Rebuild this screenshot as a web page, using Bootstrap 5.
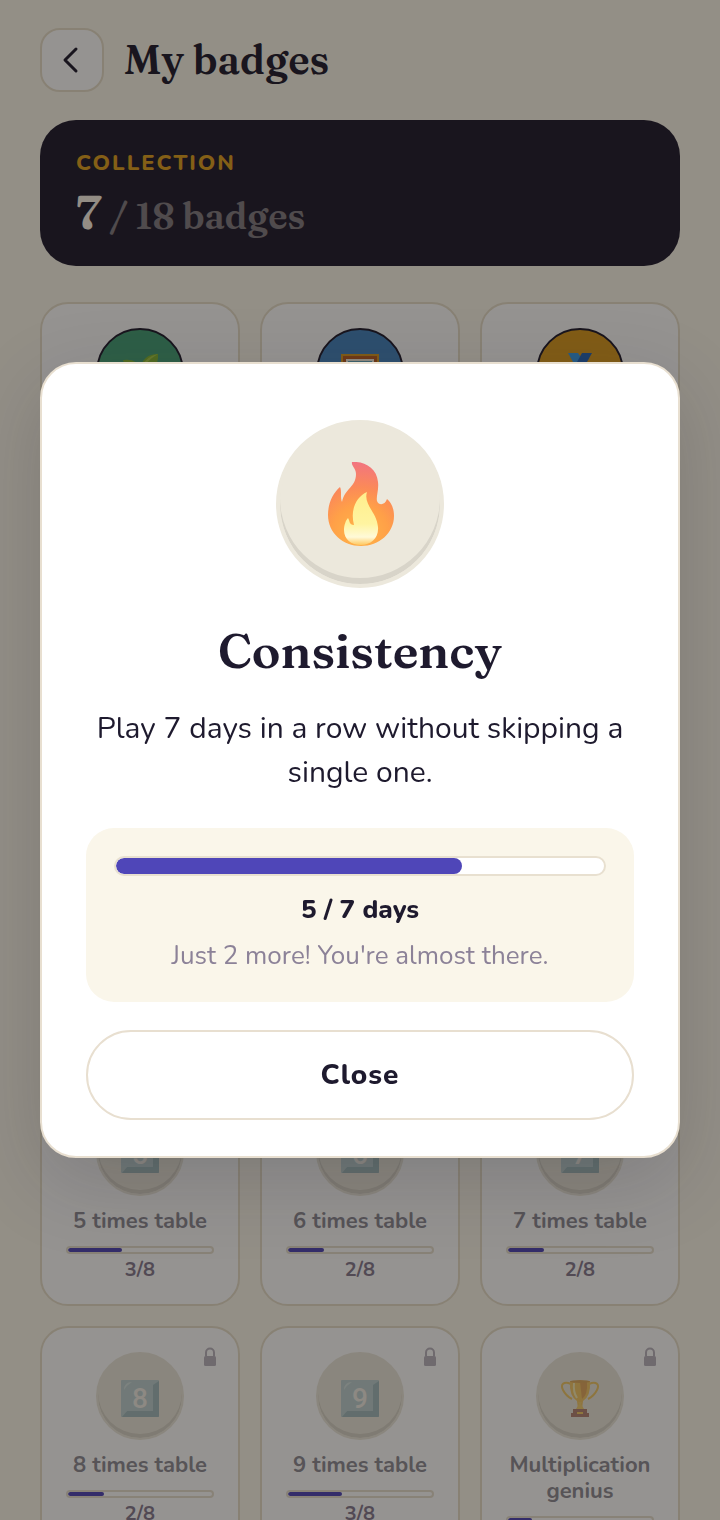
<!DOCTYPE html>
<html lang="en">
	<head>
		<meta charset="UTF-8" />
		<meta name="viewport" content="width=device-width, initial-scale=1" />
		<title>My badges</title>
		<link href="https://cdn.jsdelivr.net/npm/bootstrap@5.3.0/dist/css/bootstrap.min.css" rel="stylesheet" />
		<style>
			:root {
				--ink: #1e1a2e;
				--line: #e8dfd0;
				--tile-line: #e7dfcb;
				--disc: #ece8dc;
				--bar: #4f46b8;
			}
			body {
				background: #fbf7ec;
				color: var(--ink);
				font-family: Nunito, Lato, sans-serif;
				font-size: 22px;
				line-height: 26px;
			}
			.page {
				height: 100vh;
				overflow: hidden;
				padding: 28px 40px 0;
			}
			.display-serif {
				font-family: Fraunces, "Liberation Serif", serif;
				font-weight: 600;
			}
			.back-btn {
				width: 64px;
				height: 64px;
				border: 2px solid var(--tile-line);
				border-radius: 20px;
				background: #fff;
			}
			.header-row {
				gap: 20px;
			}
			.page-title {
				font-size: 40px;
				line-height: 48px;
			}
			.collection {
				margin-top: 28px;
				padding: 28px 36px 20px;
				border-radius: 36px;
				background: var(--ink);
			}
			.collection-label {
				color: #e0a020;
				font-weight: 800;
				letter-spacing: 2px;
				line-height: 30px;
			}
			.collection-count {
				gap: 8px;
				margin-top: 4px;
				color: #fbf5ea;
				font-size: 48px;
				line-height: 60px;
			}
			.collection-total {
				font-size: 36px;
				opacity: 0.45;
			}
			.badge-grid {
				display: grid;
				grid-template-columns: repeat(3, minmax(0, 1fr));
				gap: 20px;
				margin-top: 36px;
			}
			.tile {
				min-height: 175px;
				padding: 24px 24px 21px;
				border: 2px solid var(--tile-line);
				border-radius: 28px;
				background: #fff;
				text-align: center;
			}
			.disc {
				display: flex;
				align-items: center;
				justify-content: center;
				width: 88px;
				height: 88px;
				margin: 0 auto;
				border: 2px solid var(--disc);
				border-radius: 50%;
				background: var(--disc);
				box-shadow: inset 0 -4px 0 #d8d4c9;
			}
			.disc svg {
				width: 40px;
				height: 40px;
			}
			.locked .disc {
				padding-top: 4px;
			}
			.locked .disc svg {
				opacity: 0.65;
			}
			.earned .disc {
				border-color: var(--ink);
				box-shadow: none;
			}
			.disc-green {
				background: #44a078;
			}
			.disc-blue {
				background: #4484c0;
			}
			.disc-gold {
				background: #dc9c20;
			}
			.tile-name {
				margin-top: 12px;
				color: #8e8c96;
				font-weight: 700;
			}
			.meter {
				height: 8px;
				border: 2px solid #e8e0d0;
				border-radius: 4px;
				background: #fff;
				overflow: hidden;
			}
			.meter-fill {
				height: 100%;
				border-radius: 10px;
				background: var(--bar);
			}
			.tile .meter {
				margin: 12px 0 3px;
			}
			.tile-count {
				color: #857a90;
				font-size: 20px;
				font-weight: 700;
			}
			.padlock {
				position: absolute;
				top: 18px;
				right: 20px;
				width: 16px;
				height: 22px;
			}
			.digit {
				font: 500 28px Roboto, sans-serif;
				fill: #f4f0ec;
				text-anchor: middle;
			}
			.modal-backdrop.show {
				background: #140f0a;
				opacity: 0.45;
			}
			.modal-dialog {
				max-width: none;
				margin: 0 40px;
				min-height: 100%;
			}
			.modal-content {
				padding: 56px 44px 36px;
				border: 2px solid var(--line);
				border-radius: 36px;
				background: #fff;
				color: var(--ink);
				text-align: center;
				box-shadow: 0 24px 80px rgba(30, 26, 46, 0.18);
			}
			.modal-content .disc {
				width: 168px;
				height: 168px;
				border-width: 4px;
				box-shadow: inset 0 -6px 0 #d8d4c9;
			}
			.modal-content .disc svg {
				width: 84px;
				height: 84px;
			}
			.badge-title {
				margin: 33px 0 26px;
				font-size: 48px;
				line-height: 60px;
			}
			.badge-text {
				margin: 0 0 33px;
				font-size: 30px;
				line-height: 44px;
			}
			.progress-panel {
				padding: 28px;
				border-radius: 28px;
				background: #faf6ea;
				font-size: 26px;
				line-height: 36px;
			}
			.progress-panel .meter {
				height: 20px;
				margin-bottom: 16px;
				border-radius: 10px;
			}
			.day-count {
				font-weight: 800;
			}
			.hint {
				margin-top: 10px;
				color: #8c8298;
			}
			.close-btn {
				height: 90px;
				margin-top: 28px;
				border: 2px solid var(--line);
				border-radius: 45px;
				background: #fff;
				color: var(--ink);
				font-size: 28px;
				font-weight: 800;
				letter-spacing: 1px;
			}
		</style>
	</head>
	<body>
		<!-- Shared shapes: flame colours, keycap face, padlock -->
		<svg width="0" height="0" class="position-absolute" aria-hidden="true">
			<defs>
				<radialGradient id="flame-outer" gradientUnits="userSpaceOnUse" cx="42" cy="72" r="72">
					<stop offset="0" stop-color="#ffb648" />
					<stop offset="0.4" stop-color="#ffa048" />
					<stop offset="0.65" stop-color="#fb8a58" />
					<stop offset="1" stop-color="#f27480" />
				</radialGradient>
				<linearGradient id="flame-inner" x1="0" y1="0" x2="0" y2="1">
					<stop offset="0" stop-color="#ffee8c" />
					<stop offset="0.6" stop-color="#fff4a0" />
					<stop offset="0.85" stop-color="#fffad8" />
					<stop offset="1" stop-color="#ffc860" />
				</linearGradient>
			</defs>
			<symbol id="keycap" viewBox="0 0 40 40">
				<rect x="1" y="2" width="38" height="37" rx="1" fill="#a4c4cc" />
				<path d="M39 3v35q0 1-1 1H2l5-6h26V7z" fill="#7ba4ae" />
				<path d="M1 38V3l6 4v26z" fill="#a4c4cc" />
				<path d="M4 12q0-8 8-8-5 3-8 8z" fill="#c5dce0" />
			</symbol>
			<symbol id="lock" viewBox="0 0 16 22">
				<path d="M4 10V6.500a4 4 0 0 1 8 0V10" fill="none" stroke="#bbb5c0" stroke-width="2" />
				<rect x="2" y="10" width="12" height="10" rx="1.500" fill="#bbb5c0" />
			</symbol>
		</svg>

		<div class="page">
			<header class="header-row d-flex align-items-center">
				<button type="button" class="back-btn d-flex align-items-center justify-content-center p-0" aria-label="Back">
					<svg width="28" height="32" viewBox="0 0 28 32" fill="none" stroke="#1e1a2e" stroke-width="3" stroke-linecap="round" stroke-linejoin="round">
						<path d="M18 5 7 16l11 11" />
					</svg>
				</button>
				<h1 class="page-title display-serif mb-0">My badges</h1>
			</header>

			<section class="collection">
				<div class="collection-label">COLLECTION</div>
				<div class="collection-count display-serif d-flex align-items-baseline">
					7 <span class="collection-total">/ 18 badges</span>
				</div>
			</section>

			<main class="badge-grid">
				<!-- Earned -->
				<div class="tile earned">
					<div class="disc disc-green">
						<svg viewBox="0 0 40 40"><path d="M20 38V21Q7 23 3 8q14-2 17 9Q23 2 38 2q1 17-16 19v17z" fill="#83b633" /><path d="M22 18Q26 9 38 2q-11 2-16 12z" fill="#a8cc48" /></svg>
					</div>
				</div>
				<div class="tile earned">
					<div class="disc disc-blue">
						<svg viewBox="0 0 40 40"><path d="M1 2h38v36H1z" fill="#d99a22" /><path d="M3 4h34v32H3z" fill="#b75b24" /><path d="M6 7h28v26H6z" fill="#f5efe0" /><path d="M8 9h24v22H8z" fill="#60a5bd" /></svg>
					</div>
				</div>
				<div class="tile earned">
					<div class="disc disc-gold">
						<svg viewBox="0 0 40 40"><path d="M8 1h10l12 18H18z" fill="#379be8" /><path d="M22 1h10L22 19H12z" fill="#2464b8" /><circle cx="20" cy="27" r="11" fill="#fbc02d" /></svg>
					</div>
				</div>
				<div class="tile"></div>
				<div class="tile"></div>
				<div class="tile"></div>
				<div class="tile"></div>
				<div class="tile"></div>
				<div class="tile"></div>
				<div class="tile"></div>
				<div class="tile"></div>
				<div class="tile"></div>

				<!-- Locked -->
				<div class="tile locked position-relative">
					<div class="disc"><svg viewBox="0 0 40 40"><use href="#keycap" /><text class="digit" x="20" y="30">5</text></svg></div>
					<div class="tile-name">5 times table</div>
					<div class="meter"><div class="meter-fill" style="width: 37.5%"></div></div>
					<div class="tile-count">3/8</div>
				</div>
				<div class="tile locked position-relative">
					<div class="disc"><svg viewBox="0 0 40 40"><use href="#keycap" /><text class="digit" x="20" y="30">6</text></svg></div>
					<div class="tile-name">6 times table</div>
					<div class="meter"><div class="meter-fill" style="width: 25%"></div></div>
					<div class="tile-count">2/8</div>
				</div>
				<div class="tile locked position-relative">
					<div class="disc"><svg viewBox="0 0 40 40"><use href="#keycap" /><text class="digit" x="20" y="30">7</text></svg></div>
					<div class="tile-name">7 times table</div>
					<div class="meter"><div class="meter-fill" style="width: 25%"></div></div>
					<div class="tile-count">2/8</div>
				</div>
				<div class="tile locked position-relative">
					<svg class="padlock"><use href="#lock" /></svg>
					<div class="disc"><svg viewBox="0 0 40 40"><use href="#keycap" /><text class="digit" x="20" y="30">8</text></svg></div>
					<div class="tile-name">8 times table</div>
					<div class="meter"><div class="meter-fill" style="width: 25%"></div></div>
					<div class="tile-count">2/8</div>
				</div>
				<div class="tile locked position-relative">
					<svg class="padlock"><use href="#lock" /></svg>
					<div class="disc"><svg viewBox="0 0 40 40"><use href="#keycap" /><text class="digit" x="20" y="30">9</text></svg></div>
					<div class="tile-name">9 times table</div>
					<div class="meter"><div class="meter-fill" style="width: 37.5%"></div></div>
					<div class="tile-count">3/8</div>
				</div>
				<div class="tile locked position-relative">
					<svg class="padlock"><use href="#lock" /></svg>
					<div class="disc">
						<svg viewBox="0 0 40 40">
							<path d="M11 6C4 3 0 6 3 12q3 6 9 9M29 6c7-3 11 0 8 6q-3 6-9 9" fill="none" stroke="#f5b82c" stroke-width="2" />
							<path d="M10 3h20q1 15-7 20l-1 8h-4l-1-8Q9 18 10 3z" fill="#fbb72d" />
							<path d="M20 4h7q1 13-5 17z" fill="#e08a20" />
							<path d="M14 5q-1 9 3 15" fill="none" stroke="#fff0a0" stroke-width="2" />
							<ellipse cx="20" cy="3.500" rx="10" ry="1.500" fill="#d98b20" />
							<path d="M18 24h4l-1 2 3 5h-8l3-5z" fill="#f9c43c" />
							<path d="M13 31h14v4h2v4H11v-4h2z" fill="#985040" />
							<path d="M17 34h6v2h-6z" fill="#fbc02d" />
						</svg>
					</div>
					<div class="tile-name">Multiplication genius</div>
					<div class="meter"><div class="meter-fill" style="width: 17%"></div></div>
				</div>
			</main>
		</div>

		<div class="modal-backdrop show"></div>
		<div class="modal d-block" tabindex="-1" role="dialog" aria-modal="true" aria-labelledby="badge-title">
			<div class="modal-dialog d-flex align-items-center">
				<div class="modal-content">
					<div class="disc">
						<svg viewBox="0 0 84 84">
							<path d="M34 0C46-1 59 6 60 20c1 8-2 14-1 19 2 5 8 4 10-2 4 3 7 9 7 17 0 17-15 30-33 30S10 71 10 53c0-12 5-22 12-28 2 4 0 10 2 15 3-14 14-15 14-28 0-6-5-8-4-12z" fill="url(#flame-outer)" />
							<path d="M49 30c-4 13 10 20 11 35 1 11-7 18-17 18S26 77 26 68c0-5 2-10 4-12 2 3 1 7 6 7-4-15 2-28 13-33z" fill="url(#flame-inner)" />
						</svg>
					</div>
					<h2 class="badge-title display-serif" id="badge-title">Consistency</h2>
					<p class="badge-text">Play 7 days in a row without skipping a single one.</p>
					<div class="progress-panel">
						<div class="meter" role="progressbar" aria-valuenow="5" aria-valuemin="0" aria-valuemax="7" aria-label="Days played">
							<div class="meter-fill" style="width: 71%"></div>
						</div>
						<div class="day-count">5 / 7 days</div>
						<div class="hint">Just 2 more! You're almost there.</div>
					</div>
					<button type="button" class="close-btn w-100">Close</button>
				</div>
			</div>
		</div>

		<script src="https://cdn.jsdelivr.net/npm/bootstrap@5.3.0/dist/js/bootstrap.bundle.min.js"></script>
	</body>
</html>
